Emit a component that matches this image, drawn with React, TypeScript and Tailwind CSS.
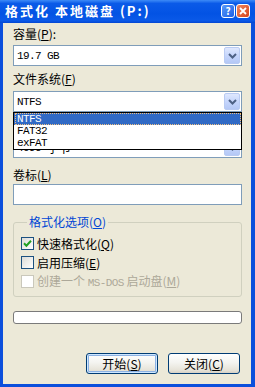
import React from 'react'

const mono = "font-['Liberation_Mono',monospace] text-[11px] tracking-[-0.6px]"

function Chevron() {
  return (
    <svg width="9" height="6" viewBox="0 0 9 6" fill="none">
      <path d="M1 1l3.5 3.5L8 1" stroke="#4d6185" strokeWidth="2" />
    </svg>
  )
}

function Combo({ children }: { children: React.ReactNode }) {
  return (
    <div className="flex h-[21px] items-stretch border border-[#7f9db9] bg-white">
      <div className="flex flex-1 items-center pl-[3px] text-black">{children}</div>
      <div className="my-px mr-px flex w-[16px] items-center justify-center rounded-[2px] border border-[#b9cbf3] bg-[linear-gradient(180deg,#dfe8fe_0%,#c6d6fc_50%,#b4c8f6_100%)]">
        <Chevron />
      </div>
    </div>
  )
}

function CheckRow({
  checked,
  disabled,
  children,
}: {
  checked?: boolean
  disabled?: boolean
  children: React.ReactNode
}) {
  return (
    <div className="flex h-[19px] items-center gap-[3px]">
      <div
        className={`flex h-[13px] w-[13px] items-center justify-center border ${
          disabled
            ? 'border-[#cac8bb] bg-white'
            : 'border-[#1c5180] bg-[linear-gradient(135deg,#dcdcd7_0%,#ffffff_100%)]'
        }`}
      >
        {checked && (
          <svg width="11" height="11" viewBox="0 0 11 11" fill="none">
            <path d="M2 5.3l2.4 2.4L9 2.8" stroke="#21a121" strokeWidth="2" />
          </svg>
        )}
      </div>
      <span className={disabled ? 'text-[#aca899]' : 'text-black'}>{children}</span>
    </div>
  )
}

function Button({ children, primary }: { children: React.ReactNode; primary?: boolean }) {
  return (
    <button
      className={`flex h-[21px] w-[72px] items-center justify-center rounded-[3px] border border-[#003c74] bg-[linear-gradient(180deg,#ffffff_0%,#f4f4f0_45%,#e6e3d8_85%,#d6d0c5_100%)] text-[12px] text-black ${
        primary ? 'shadow-[inset_0_0_0_1px_#cee7ff,inset_0_0_0_2px_#8db2e3]' : ''
      }`}
    >
      {children}
    </button>
  )
}

export default function App() {
  return (
    <div className="flex h-[387px] w-[255px] flex-col bg-[#0b4fdc] font-['Noto_Sans_CJK_SC',sans-serif] text-[12px] leading-[14px]">
      {/* Title bar */}
      <div className="flex h-[23px] items-center bg-[linear-gradient(180deg,#3d8bf7_0%,#0a5ae8_15%,#0353e4_60%,#0a59e8_90%,#0346d2_100%)] pr-[5px] pb-[2px] pl-[5px]">
        <span className="flex-1 text-[13px] font-bold tracking-[2px] text-white">格式化 本地磁盘 (P:)</span>
        <div className="flex gap-px">
          <div className="flex h-[14px] w-[14px] items-center justify-center rounded-[3px] border border-white bg-[linear-gradient(135deg,#5a9af9_0%,#1c5fe6_100%)] text-[10px] leading-none font-bold text-white">
            ?
          </div>
          <div className="flex h-[14px] w-[14px] items-center justify-center rounded-[3px] border border-white bg-[linear-gradient(135deg,#f0875e_0%,#d5431b_100%)]">
            <svg width="8" height="8" viewBox="0 0 8 8">
              <path d="M1 1l6 6M7 1l-6 6" stroke="#fff" strokeWidth="1.8" />
            </svg>
          </div>
        </div>
      </div>

      {/* Body */}
      <div className="mr-[4px] mb-[3px] ml-[3px] flex flex-1 flex-col bg-[#ece9d8] pt-[4px] pr-[9px] pl-[10px] text-black">
        <div className="h-[14px]">
          容量(<u>P</u>):
        </div>
        <div className="mt-[4px]">
          <Combo>
            <span className={mono}>19.7 GB</span>
          </Combo>
        </div>

        <div className="mt-[6px] h-[14px]">
          文件系统(<u>F</u>)
        </div>
        <div className="relative mt-[5px]">
          <Combo>
            <span className={mono}>NTFS</span>
          </Combo>
          {/* open dropdown list */}
          <div className="absolute top-full right-0 left-0 z-10 border border-black bg-white">
            <div className="h-[12px] bg-[#316ac5] pl-px">
              <div className="flex h-full items-center border border-dotted border-[#f0c080] pl-[1px] text-white">
                <span className={mono}>NTFS</span>
              </div>
            </div>
            <div className="flex h-[12px] items-center pl-[3px]">
              <span className={mono}>FAT32</span>
            </div>
            <div className="flex h-[12px] items-center pl-[3px]">
              <span className={mono}>exFAT</span>
            </div>
          </div>
        </div>

        {/* allocation unit label, hidden behind the open list */}
        <div className="mt-[6px] h-[14px]" />
        <div className="mt-[5px]">
          <Combo>
            <span className={mono}>4096</span>
            <span className="ml-[6px]">字节</span>
          </Combo>
        </div>

        <div className="mt-[10px] h-[14px]">
          卷标(<u>L</u>)
        </div>
        <div className="mt-[2px] h-[21px] border border-[#7f9db9] bg-white" />

        <fieldset className="mt-[10px] rounded-[3px] border border-[#d0d0bf] pt-[5px] pb-[5px] pl-[7px]">
          <legend className="ml-[6px] h-[14px] px-[2px] text-[#0046d5]">
            格式化选项(<u>O</u>)
          </legend>
          <CheckRow checked>
            快速格式化(<u>Q</u>)
          </CheckRow>
          <CheckRow>
            启用压缩(<u>E</u>)
          </CheckRow>
          <CheckRow disabled>
            创建一个 <span className={mono}>MS-DOS</span> 启动盘(<u>M</u>)
          </CheckRow>
        </fieldset>

        <div className="mt-[14px] h-[13px] rounded-[3px] border border-[#7a7a7a] bg-white" />

        <div className="mt-[29px] mr-[2px] flex justify-end gap-[10px]">
          <Button primary>
            开始(<u>S</u>)
          </Button>
          <Button>
            关闭(<u>C</u>)
          </Button>
        </div>
      </div>
    </div>
  )
}
